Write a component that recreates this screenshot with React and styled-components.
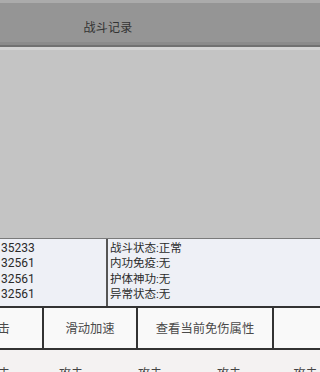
import React from "react";
import styled, { createGlobalStyle } from "styled-components";

const GlobalStyle = createGlobalStyle`
  html, body {
    margin: 0;
    padding: 0;
    background: #c4c4c4;
    overflow: hidden;
  }
  body {
    font-family: Roboto, "Noto Sans CJK SC", sans-serif;
  }
`;

const Screen = styled.div`
  width: 100%;
  min-width: 238px;
  height: 372px;
  overflow: hidden;
  display: flex;
  flex-direction: column;
`;

const TopStrip = styled.div`
  height: 3px;
  background: #ababab;
  flex-shrink: 0;
`;

const HeaderWrap = styled.div`
  background: #959595;
  flex-shrink: 0;
`;

const Header = styled.div`
  width: 238px;
  height: 39px;
  display: flex;
  align-items: center;
  justify-content: center;
  padding: 7px 22px 0 0;
  box-sizing: border-box;
`;

const Title = styled.span`
  font-size: 12px;
  color: #333;
  letter-spacing: 0.3px;
`;

const Band = styled.div`
  height: ${(p) => p.h}px;
  background: ${(p) => p.c};
  flex-shrink: 0;
`;

const Content = styled.div`
  flex: 1;
  background: #c4c4c4;
`;

const InfoPanel = styled.div`
  height: 67px;
  flex-shrink: 0;
  background: #eef0f6;
  border-top: 1px solid #7a7a7a;
  display: grid;
  grid-template-columns: 108px 1fr;
`;

const InfoColumn = styled.div`
  padding-top: 2px;
  padding-left: ${(p) => (p.left ? 1 : 2)}px;
  border-right: ${(p) => (p.left ? "2px solid #555" : "none")};
  font-size: ${(p) => (p.left ? 12 : 11.5)}px;
  color: #2a2a2a;
`;

const InfoLine = styled.div`
  height: 15.4px;
  line-height: 15.4px;
  white-space: nowrap;
`;

const ButtonRow = styled.div`
  height: 40px;
  flex-shrink: 0;
  display: flex;
  margin-left: -47px;
  border-top: 2px solid #333;
  border-bottom: 2px solid #333;
  background: #f9f9f9;
`;

const ActionButton = styled.div`
  width: ${(p) => p.w}px;
  flex-shrink: 0;
  display: flex;
  align-items: center;
  justify-content: center;
  border-left: ${(p) => (p.first ? "none" : "2px solid #333")};
  font-size: 12.3px;
  color: #4a4a4a;
  white-space: nowrap;
`;

const BottomRow = styled.div`
  height: 22px;
  flex-shrink: 0;
  display: flex;
  margin-left: -38px;
  background: #f4f2f2;
  padding-top: 16px;
  box-sizing: border-box;
`;

const AttackItem = styled.div`
  width: ${(p) => p.w}px;
  flex-shrink: 0;
  text-align: center;
  font-size: 12px;
  line-height: 17px;
  color: #444;
`;

const leftValues = ["35233", "32561", "32561", "32561"];
const rightValues = ["战斗状态:正常", "内功免疫:无", "护体神功:无", "异常状态:无"];
const buttons = [
  { label: "攻击", w: 89 },
  { label: "滑动加速", w: 92 },
  { label: "查看当前免伤属性", w: 134 },
  { label: "", w: 200 },
];
const attacks = [72, 74, 84, 74, 79, 79];

export default function App() {
  return (
    <Screen>
      <GlobalStyle />
      <TopStrip />
      <HeaderWrap>
        <Header>
          <Title>战斗记录</Title>
        </Header>
      </HeaderWrap>
      <Band h={3} c="#8b8b8b" />
      <Band h={2} c="#717171" />
      <Band h={3} c="#d3d3d3" />
      <Content />
      <InfoPanel>
        <InfoColumn left>
          {leftValues.map((v, i) => (
            <InfoLine key={i}>{v}</InfoLine>
          ))}
        </InfoColumn>
        <InfoColumn>
          {rightValues.map((v, i) => (
            <InfoLine key={i}>{v}</InfoLine>
          ))}
        </InfoColumn>
      </InfoPanel>
      <ButtonRow>
        {buttons.map((b, i) => (
          <ActionButton key={i} w={b.w} first={i === 0}>
            {b.label}
          </ActionButton>
        ))}
      </ButtonRow>
      <BottomRow>
        {attacks.map((w, i) => (
          <AttackItem key={i} w={w}>
            攻击
          </AttackItem>
        ))}
      </BottomRow>
    </Screen>
  );
}
